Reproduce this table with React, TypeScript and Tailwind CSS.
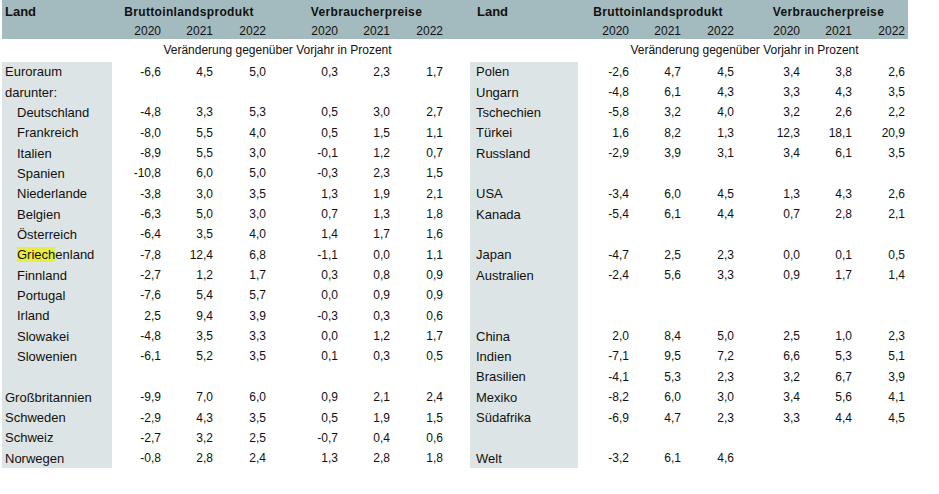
type Row = { land: string; indent?: boolean; hl?: boolean; v?: string[] };

const LEFT: Row[] = [
  { land: 'Euroraum', v: ['-6,6', '4,5', '5,0', '0,3', '2,3', '1,7'] },
  { land: 'darunter:' },
  { land: 'Deutschland', indent: true, v: ['-4,8', '3,3', '5,3', '0,5', '3,0', '2,7'] },
  { land: 'Frankreich', indent: true, v: ['-8,0', '5,5', '4,0', '0,5', '1,5', '1,1'] },
  { land: 'Italien', indent: true, v: ['-8,9', '5,5', '3,0', '-0,1', '1,2', '0,7'] },
  { land: 'Spanien', indent: true, v: ['-10,8', '6,0', '5,0', '-0,3', '2,3', '1,5'] },
  { land: 'Niederlande', indent: true, v: ['-3,8', '3,0', '3,5', '1,3', '1,9', '2,1'] },
  { land: 'Belgien', indent: true, v: ['-6,3', '5,0', '3,0', '0,7', '1,3', '1,8'] },
  { land: 'Österreich', indent: true, v: ['-6,4', '3,5', '4,0', '1,4', '1,7', '1,6'] },
  { land: 'Griechenland', indent: true, hl: true, v: ['-7,8', '12,4', '6,8', '-1,1', '0,0', '1,1'] },
  { land: 'Finnland', indent: true, v: ['-2,7', '1,2', '1,7', '0,3', '0,8', '0,9'] },
  { land: 'Portugal', indent: true, v: ['-7,6', '5,4', '5,7', '0,0', '0,9', '0,9'] },
  { land: 'Irland', indent: true, v: ['2,5', '9,4', '3,9', '-0,3', '0,3', '0,6'] },
  { land: 'Slowakei', indent: true, v: ['-4,8', '3,5', '3,3', '0,0', '1,2', '1,7'] },
  { land: 'Slowenien', indent: true, v: ['-6,1', '5,2', '3,5', '0,1', '0,3', '0,5'] },
  { land: '' },
  { land: 'Großbritannien', v: ['-9,9', '7,0', '6,0', '0,9', '2,1', '2,4'] },
  { land: 'Schweden', v: ['-2,9', '4,3', '3,5', '0,5', '1,9', '1,5'] },
  { land: 'Schweiz', v: ['-2,7', '3,2', '2,5', '-0,7', '0,4', '0,6'] },
  { land: 'Norwegen', v: ['-0,8', '2,8', '2,4', '1,3', '2,8', '1,8'] },
];

const RIGHT: Row[] = [
  { land: 'Polen', v: ['-2,6', '4,7', '4,5', '3,4', '3,8', '2,6'] },
  { land: 'Ungarn', v: ['-4,8', '6,1', '4,3', '3,3', '4,3', '3,5'] },
  { land: 'Tschechien', v: ['-5,8', '3,2', '4,0', '3,2', '2,6', '2,2'] },
  { land: 'Türkei', v: ['1,6', '8,2', '1,3', '12,3', '18,1', '20,9'] },
  { land: 'Russland', v: ['-2,9', '3,9', '3,1', '3,4', '6,1', '3,5'] },
  { land: '' },
  { land: 'USA', v: ['-3,4', '6,0', '4,5', '1,3', '4,3', '2,6'] },
  { land: 'Kanada', v: ['-5,4', '6,1', '4,4', '0,7', '2,8', '2,1'] },
  { land: '' },
  { land: 'Japan', v: ['-4,7', '2,5', '2,3', '0,0', '0,1', '0,5'] },
  { land: 'Australien', v: ['-2,4', '5,6', '3,3', '0,9', '1,7', '1,4'] },
  { land: '' },
  { land: '' },
  { land: 'China', v: ['2,0', '8,4', '5,0', '2,5', '1,0', '2,3'] },
  { land: 'Indien', v: ['-7,1', '9,5', '7,2', '6,6', '5,3', '5,1'] },
  { land: 'Brasilien', v: ['-4,1', '5,3', '2,3', '3,2', '6,7', '3,9'] },
  { land: 'Mexiko', v: ['-8,2', '6,0', '3,0', '3,4', '5,6', '4,1'] },
  { land: 'Südafrika', v: ['-6,9', '4,7', '2,3', '3,3', '4,4', '4,5'] },
  { land: '' },
  { land: 'Welt', v: ['-3,2', '6,1', '4,6', '', '', ''] },
];

const YEARS = ['2020', '2021', '2022', '2020', '2021', '2022'];

function Table({ rows, cols, side }: { rows: Row[]; cols: string; side: 'l' | 'r' }) {
  const isL = side === 'l';
  return (
    <div className={isL ? 'w-[468px]' : 'w-[438px]'}>
      {/* header band */}
      <div className="bg-[#a3babe] h-[39px] text-[12px]">
        <div className={`grid ${cols} h-[23px] items-center font-bold`}>
          <div className={isL ? 'pl-[3px] text-[13px]' : 'pl-[7px] text-[13px]'}>Land</div>
          <div className={`col-span-3 text-center tracking-[0.35px] ${isL ? '' : 'pl-[4px]'}`}>Bruttoinlandsprodukt</div>
          <div className={`col-span-3 text-center tracking-[0.35px] ${isL ? 'pl-[24px]' : 'pl-[18px]'}`}>Verbraucherpreise</div>
        </div>
        <div className={`grid ${cols} h-[16px] items-center`}>
          <div />
          {YEARS.map((y, i) => (
            <div key={i} className="text-right">{y}</div>
          ))}
        </div>
      </div>
      <div className={`grid ${cols} h-[22.5px] items-center text-[12px]`}>
        <div />
        <div className={`col-span-6 text-center ${isL ? '' : 'pl-[6px]'}`}>Veränderung gegenüber Vorjahr in Prozent</div>
      </div>
      <div>
        {rows.map((r, i) => (
          <div key={i} className={`grid ${cols} h-[20.35px] items-center text-[12px]`}>
            <div className={`bg-[#dde4e5] h-full flex items-center text-[13px] ${r.indent ? 'pl-[15px]' : isL ? 'pl-[3px]' : 'pl-[6px]'}`}>
              {r.hl ? (
                <span>
                  <span className="bg-[#e8ee3e]">Griech</span>enland
                </span>
              ) : (
                r.land
              )}
            </div>
            {(r.v ?? ['', '', '', '', '', '']).map((n, j) => (
              <div key={j} className="text-right">{n}</div>
            ))}
          </div>
        ))}
      </div>
    </div>
  );
}

export default function App() {
  return (
    <div className="w-[939px] h-[494px] bg-white text-[#111] leading-none font-['Liberation_Sans',Arial,sans-serif] overflow-hidden">
      <div className="flex pl-[2px]">
        <Table side="l" rows={LEFT} cols="grid-cols-[110px_49px_52px_53px_72px_52px_53px_1fr]" />
        <Table side="r" rows={RIGHT} cols="grid-cols-[108px_51px_52px_53px_66px_52px_53px_1fr]" />
      </div>
    </div>
  );
}
